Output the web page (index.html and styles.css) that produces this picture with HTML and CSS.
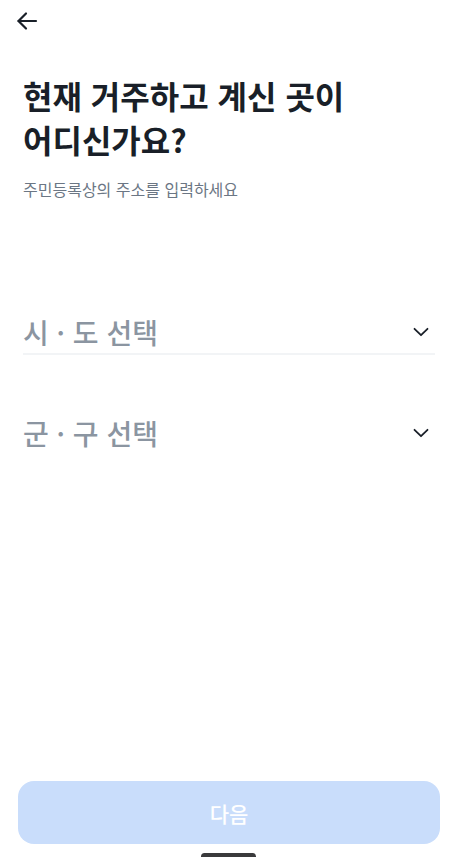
FILE: index.html
```html
<!DOCTYPE html>
<html lang="ko">
<head>
<meta charset="utf-8">
<link rel="stylesheet" href="styles.css">
</head>
<body>
<div class="screen">
  <header class="topbar">
    <svg class="back" width="24" height="24" viewBox="0 0 24 24" fill="none" stroke="#191f28" stroke-width="2.2" stroke-linecap="round" stroke-linejoin="round">
      <path d="M21 12H3.5"/>
      <path d="M11 4.5L3.5 12L11 19.5"/>
    </svg>
  </header>
  <main class="content">
    <h1 class="title">현재 거주하고 계신 곳이<br>어디신가요?</h1>
    <p class="subtitle">주민등록상의 주소를 입력하세요</p>
    <div class="selects">
      <div class="select select-first">
        <span class="placeholder">시 · 도 선택</span>
        <svg class="chev" width="16" height="10" viewBox="0 0 16 10" fill="none" stroke="#191f28" stroke-width="1.8" stroke-linecap="round" stroke-linejoin="round"><path d="M1.5 1.8L8 8.2L14.5 1.8"/></svg>
      </div>
      <div class="select">
        <span class="placeholder">군 · 구 선택</span>
        <svg class="chev" width="16" height="10" viewBox="0 0 16 10" fill="none" stroke="#191f28" stroke-width="1.8" stroke-linecap="round" stroke-linejoin="round"><path d="M1.5 1.8L8 8.2L14.5 1.8"/></svg>
      </div>
    </div>
  </main>
  <footer class="footer">
    <button class="next">다음</button>
  </footer>
  <div class="home-indicator"></div>
</div>
</body>
</html>
```
FILE: styles.css
```css
html, body {
  margin: 0;
  padding: 0;
  background: #ffffff;
}
body {
  font-family: "Noto Sans CJK KR", "Noto Sans", sans-serif;
  color: #191f28;
}
.screen {
  position: relative;
  height: 857px;
  display: flex;
  flex-direction: column;
  overflow: hidden;
}
.topbar {
  height: 42px;
  display: flex;
  align-items: center;
  padding-left: 15px;
}
.back {
  display: block;
}
.content {
  flex: 1;
  padding: 0 23px;
}
.title {
  margin: 31px 0 0;
  font-size: 32px;
  line-height: 44px;
  font-weight: 700;
  letter-spacing: 0;
}
.subtitle {
  margin: 17px 0 0;
  font-size: 16px;
  line-height: 22px;
  color: #6b7684;
  letter-spacing: 0;
}
.selects {
  margin-top: 110px;
  display: flex;
  flex-direction: column;
  gap: 56px;
}
.select {
  display: flex;
  align-items: center;
  justify-content: space-between;
  height: 43px;
  padding-right: 6px;
}
.select-first {
  border-bottom: 2px solid #f2f4f6;
}
.placeholder {
  font-size: 28px;
  line-height: 38px;
  color: #8b95a1;
  font-weight: 500;
}
.chev {
  display: block;
}
.footer {
  padding: 0 18px 13px;
}
.next {
  display: block;
  width: 100%;
  height: 63px;
  border: none;
  border-radius: 16px;
  background: #c9ddfb;
  color: #ffffff;
  font-family: "Noto Sans CJK KR", "Noto Sans", sans-serif;
  font-size: 21px;
  font-weight: 500;
}
.home-indicator {
  position: absolute;
  left: 201px;
  bottom: -3px;
  width: 55px;
  height: 7px;
  border-radius: 4px;
  background: #3a3a3c;
}
```
